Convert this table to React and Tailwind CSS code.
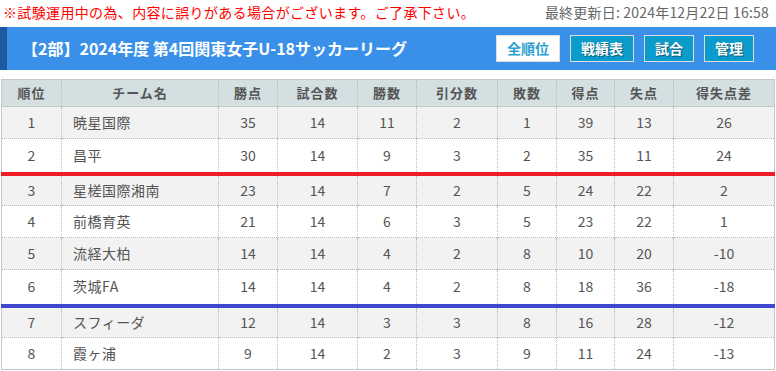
const FONT = { fontFamily: '"Noto Sans CJK JP", "Noto Sans", sans-serif' };

const cols = [
  { label: "順位", w: 60, align: "text-center" },
  { label: "チーム名", w: 157, align: "text-left" },
  { label: "勝点", w: 59, align: "text-center" },
  { label: "試合数", w: 80, align: "text-center" },
  { label: "勝数", w: 59, align: "text-center" },
  { label: "引分数", w: 81, align: "text-center" },
  { label: "敗数", w: 59, align: "text-center" },
  { label: "得点", w: 58, align: "text-center" },
  { label: "失点", w: 59, align: "text-center" },
  { label: "得失点差", w: 101, align: "text-center" },
];

const rows = [
  [1, "暁星国際", 35, 14, 11, 2, 1, 39, 13, 26],
  [2, "昌平", 30, 14, 9, 3, 2, 35, 11, 24],
  [3, "星槎国際湘南", 23, 14, 7, 2, 5, 24, 22, 2],
  [4, "前橋育英", 21, 14, 6, 3, 5, 23, 22, 1],
  [5, "流経大柏", 14, 14, 4, 2, 8, 10, 20, -10],
  [6, "茨城FA", 14, 14, 4, 2, 8, 18, 36, -18],
  [7, "スフィーダ", 12, 14, 3, 3, 8, 16, 28, -12],
  [8, "霞ヶ浦", 9, 14, 2, 3, 9, 11, 24, -13],
];

const buttons = ["全順位", "戦績表", "試合", "管理"];

export default function App() {
  return (
    <div className="w-[776px] h-[371px] overflow-hidden bg-white" style={FONT}>
      {/* notice line */}
      <div className="flex items-center justify-between h-[25px] pl-[3px] pr-[7px]">
        <span className="text-[14px] tracking-[0.35px] text-[#ff0000]">
          ※試験運用中の為、内容に誤りがある場合がございます。ご了承下さい。
        </span>
        <span className="text-[14px] tracking-[0.2px] text-[#666]">最終更新日: 2024年12月22日 16:58</span>
      </div>

      {/* title bar */}
      <div className="mt-[2px] flex items-center h-[43px] bg-[#3a90e8] border-l-[7px] border-[#1b5aa0] pr-[22px]">
        <h1 className="flex-1 pl-[15px] pb-[2px] text-[16px] font-bold text-white">
          【2部】2024年度 第4回関東女子U-18サッカーリーグ
        </h1>
        <div className="flex gap-[10px]">
          {buttons.map((b, i) => (
            <button
              key={b}
              className={[
                "h-[27px] text-[14px] font-bold border",
                b.length === 2 ? "w-[50px]" : "w-[64px]",
                i === 0
                  ? "bg-white text-[#2a9fd0] border-[#ddd]"
                  : "bg-[#0b9ccc] text-white border-[#ddd] [text-shadow:1px_1px_1px_rgba(0,0,0,0.45)]",
              ].join(" ")}
            >
              {b}
            </button>
          ))}
        </div>
      </div>

      {/* standings table */}
      <table className="mt-[9px] ml-px w-[773px] border-collapse border border-[#c8c8c8] table-fixed text-[#555]">
        <colgroup>
          {cols.map((c) => (
            <col key={c.label} style={{ width: c.w }} />
          ))}
        </colgroup>
        <thead>
          <tr className="h-[27px] bg-[#d3dfe0] border-b border-[#c8c8c8]">
            {cols.map((c) => (
              <th
                key={c.label}
                className="text-[13px] tracking-[1px] font-bold text-center border-l border-dotted border-[#bbb] first:border-l-0"
              >
                {c.label}
              </th>
            ))}
          </tr>
        </thead>
        <tbody>
          {rows.map((r, ri) => (
            <tr
              key={r[0]}
              className={[
                ri % 2 === 0 ? "bg-[#f2f2f2]" : "bg-white",
                ri === 1
                  ? "h-[35px] border-b-[4px] border-solid border-[#ee1c25]"
                  : ri === 5
                  ? "h-[36px] border-b-[4px] border-solid border-[#3f48cc]"
                  : "h-[32px] border-b border-dotted border-[#bbb]",
              ].join(" ")}
            >
              {r.map((v, ci) => (
                <td
                  key={ci}
                  className={[
                    "text-[14px] border-l border-dotted border-[#bbb] first:border-l-0",
                    cols[ci].align,
                    ci === 1 ? "pl-[11px] tracking-[0.5px]" : "",
                  ].join(" ")}
                >
                  {v}
                </td>
              ))}
            </tr>
          ))}
        </tbody>
      </table>
    </div>
  );
}
